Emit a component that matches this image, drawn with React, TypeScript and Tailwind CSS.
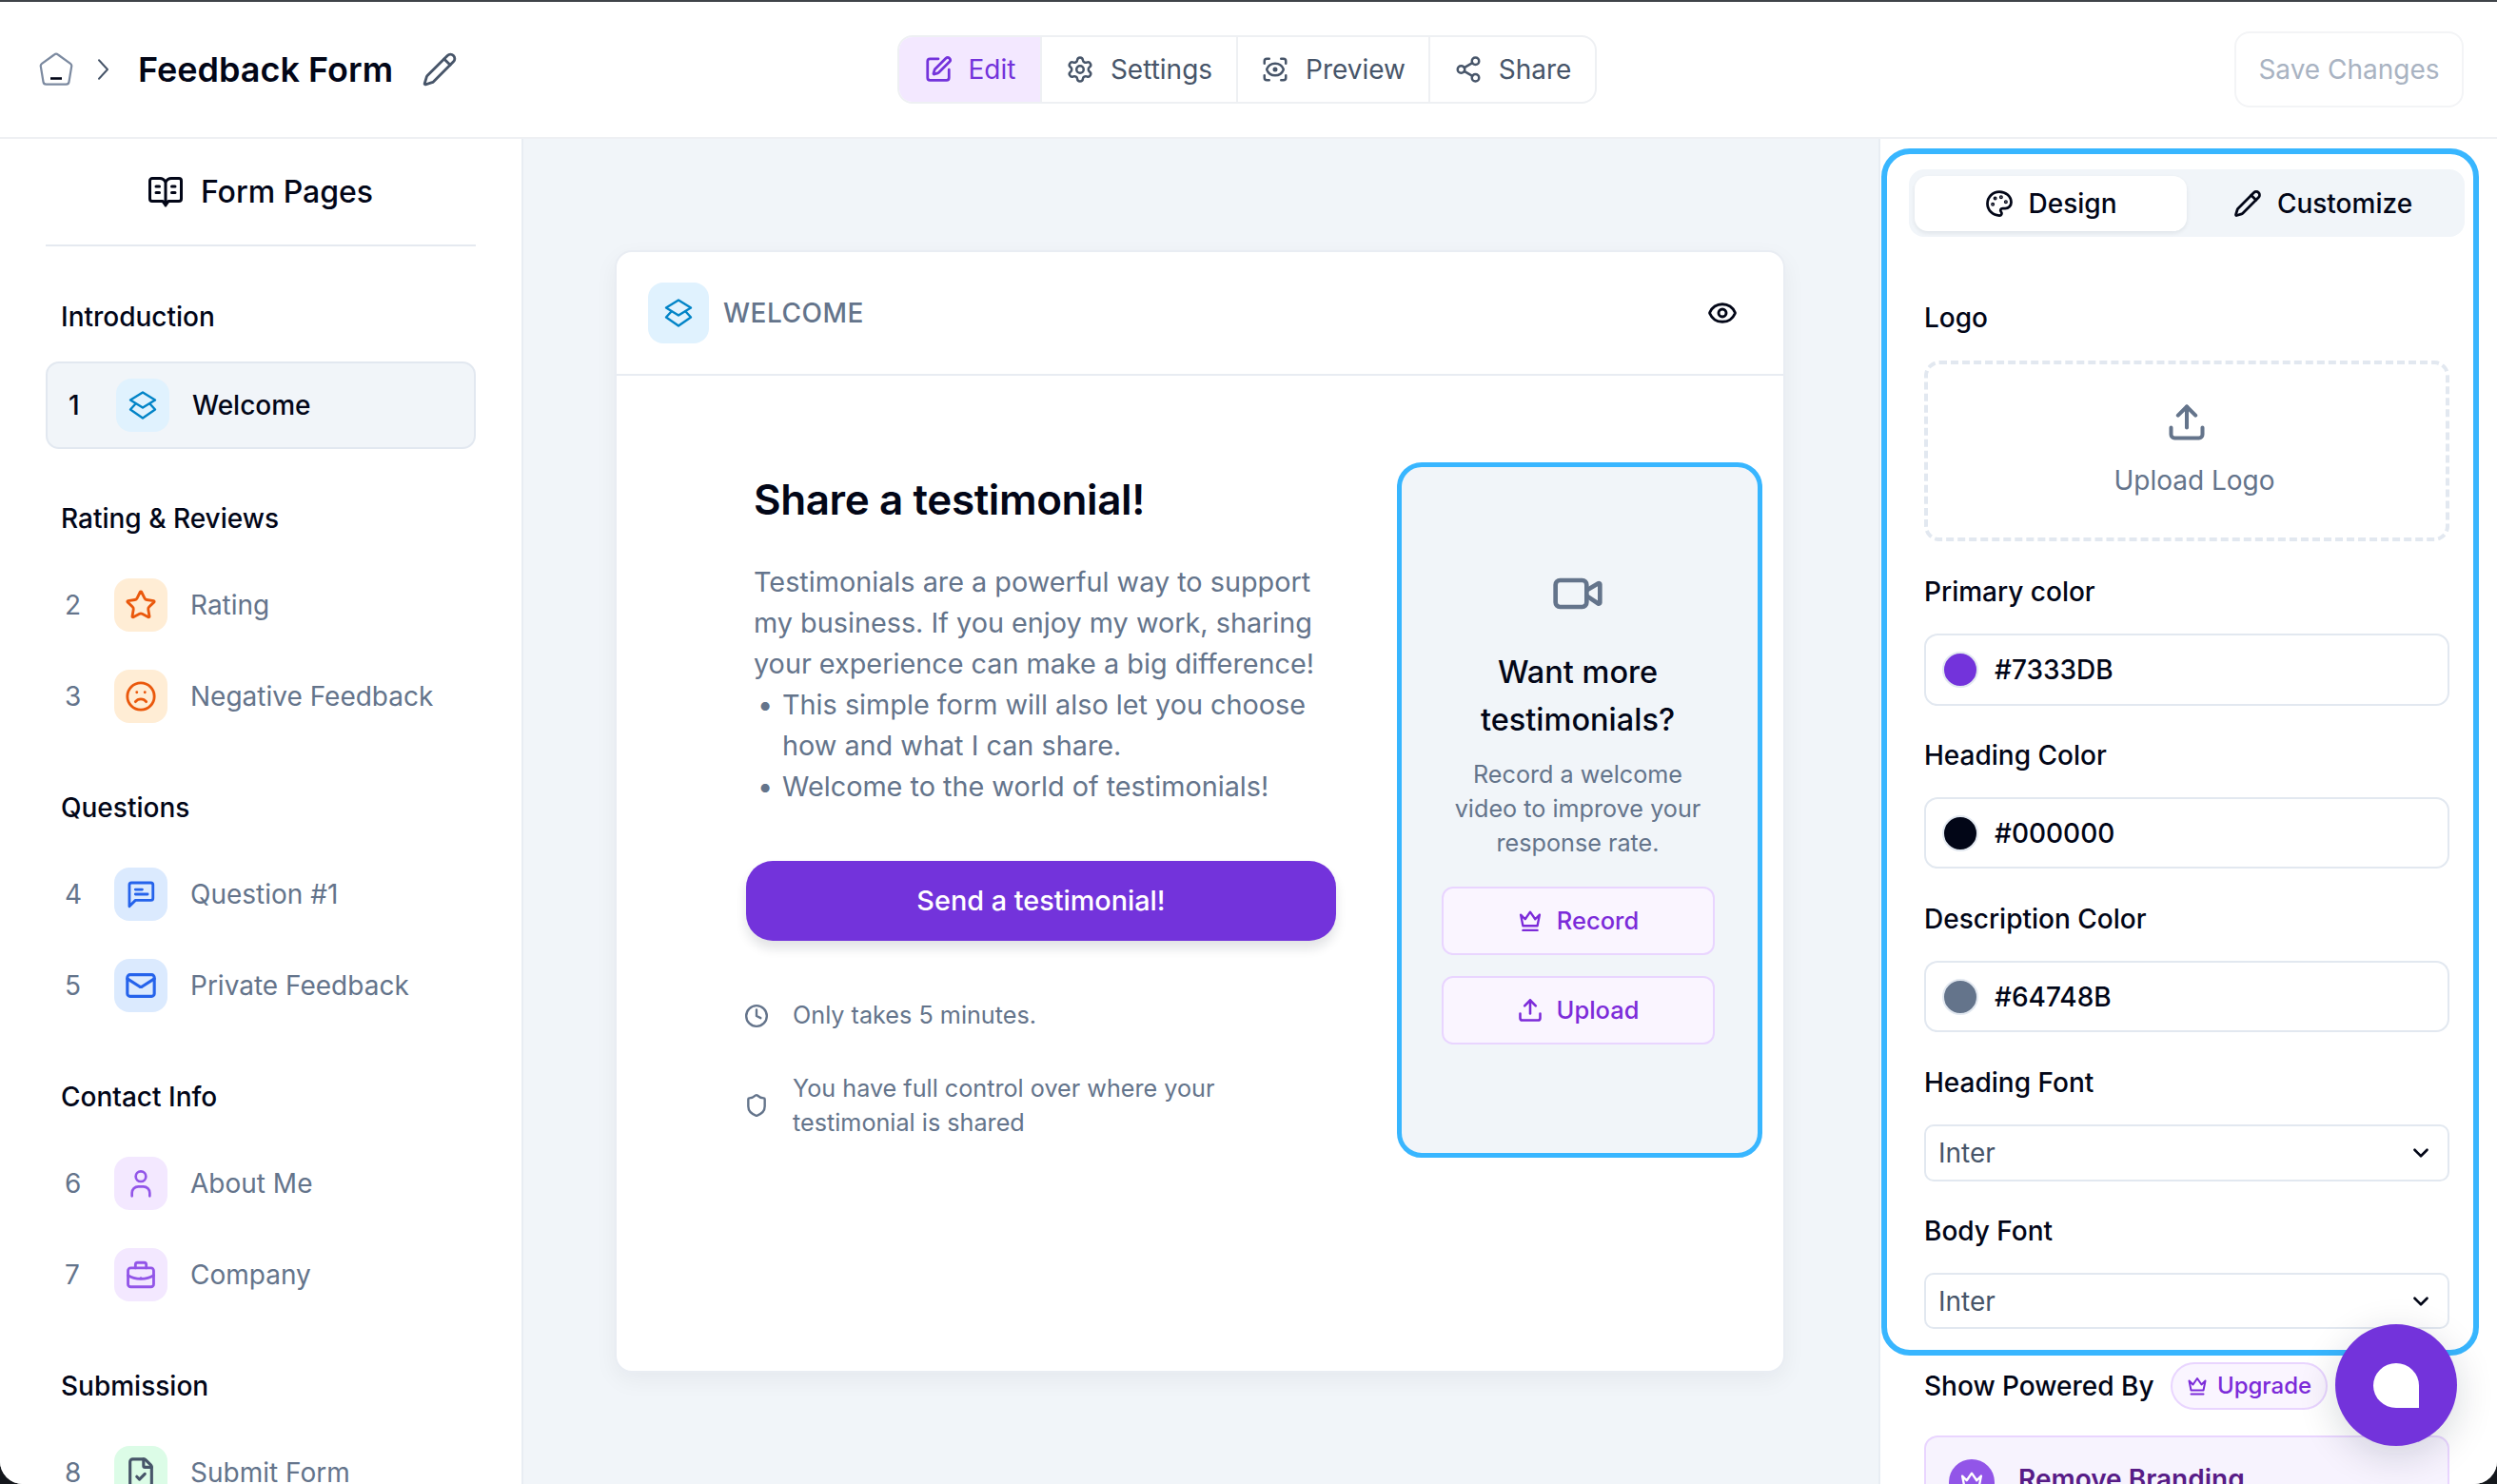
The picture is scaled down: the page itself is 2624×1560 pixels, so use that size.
import { ChevronDown, Clock, Eye, FileCheck, Frown, Mail, Palette, Pencil, ScanEye, Settings, Share2, Shield, SquarePen, Star, Upload, Video } from "lucide-react";
import type { ReactNode } from "react";

const Diamonds = ({ className }: { className?: string }) => (
  <svg viewBox="0 0 30 30" fill="none" stroke="currentColor" strokeWidth="2.4" strokeLinejoin="round" strokeLinecap="round" className={className}>
    <path d="M15 1.5 28 9.5 15 17.5 2 9.5Z" />
    <path d="M7 14 2 19.5 15 28.5 28 19.5 23 14" />
  </svg>
);
const Crown = ({ className }: { className?: string }) => (
  <svg viewBox="0 0 24 24" fill="none" stroke="currentColor" strokeWidth="2" strokeLinejoin="round" strokeLinecap="round" className={className}>
    <path d="M3.5 6.5 7.5 10.5 12 4 16.5 10.5 20.5 6.5 18.5 16.5H5.5Z" />
    <path d="M5.5 20.5H18.5" />
  </svg>
);
const MessageText = ({ className }: { className?: string }) => (
  <svg viewBox="0 0 24 24" fill="none" stroke="currentColor" strokeWidth="2" strokeLinejoin="round" strokeLinecap="round" className={className}>
    <path d="M3.5 21V5a1.5 1.5 0 0 1 1.5-1.5h14.5A1.5 1.5 0 0 1 21 5v10a1.5 1.5 0 0 1-1.5 1.5H8Z" />
    <path d="M8 8.5h5M8 12h9" />
  </svg>
);
const Person = ({ className }: { className?: string }) => (
  <svg viewBox="0 0 24 24" fill="none" stroke="currentColor" strokeWidth="2" strokeLinecap="round" className={className}>
    <circle cx="12" cy="6.5" r="4" />
    <path d="M5 22v-2.5a5 5 0 0 1 5-5h4a5 5 0 0 1 5 5V22" />
  </svg>
);
const Case = ({ className }: { className?: string }) => (
  <svg viewBox="0 0 24 24" fill="none" stroke="currentColor" strokeWidth="2" strokeLinejoin="round" strokeLinecap="round" className={className}>
    <rect x="2.5" y="7" width="19" height="14" rx="2" />
    <path d="M8 7V4.5A1.5 1.5 0 0 1 9.5 3h5A1.5 1.5 0 0 1 16 4.5V7" />
    <path d="M2.5 12.5c5 3.5 14 3.5 19 0" />
    <path d="M12 14.5v.01" />
  </svg>
);
const HomeShape = ({ className }: { className?: string }) => (
  <svg viewBox="0 0 36 36" fill="none" className={className}>
    <path d="M16 2.5a3.2 3.2 0 0 1 4 0L33 11.8a3 3 0 0 1 1.2 3L31.5 31a3 3 0 0 1-3 2.6h-21a3 3 0 0 1-3-2.6L1.8 14.8a3 3 0 0 1 1.2-3Z" stroke="#7c8aa0" strokeWidth="2.2" strokeLinejoin="round" />
    <path d="M12 27.5h12" stroke="#020617" strokeWidth="2.6" />
  </svg>
);
const Book = ({ className }: { className?: string }) => (
  <svg viewBox="0 0 36 33" fill="none" stroke="currentColor" strokeWidth="3" strokeLinejoin="round" strokeLinecap="round" className={className}>
    <path d="M18 6.5V31M18 6.5C16.5 3.5 15 2.5 12 2.5H4A2.5 2.5 0 0 0 1.5 5v19A2.5 2.5 0 0 0 4 26.5h11l3 4 3-4h11a2.5 2.5 0 0 0 2.5-2.5V5A2.5 2.5 0 0 0 32 2.5h-8C21 2.5 19.5 3.5 18 6.5Z" />
    <path d="M8 11h3.5M8 17.5h3.5M24.5 11H28M24.5 17.5H28" />
  </svg>
);

function Badge({ bg, children, className = "h-[56px] w-[56px] rounded-[16px]" }: { bg: string; children: ReactNode; className?: string }) {
  return <div className={`flex shrink-0 items-center justify-center ${bg} ${className}`}>{children}</div>;
}

function Row({ n, label, bg, icon }: { n: number; label: string; bg: string; icon: ReactNode }) {
  return (
    <div className="mt-[40px] flex h-[56px] items-center first:mt-0">
      <span className="w-[72px] pl-[20px] text-[28px] text-[#64748b]">{n}</span>
      <Badge bg={bg}>{icon}</Badge>
      <span className="ml-[24px] text-[28px] text-[#64748b]">{label}</span>
    </div>
  );
}

function Section({ title, mt, children, gap = "mt-[45px]" }: { title: string; mt: string; children: ReactNode; gap?: string }) {
  return (
    <div className={mt}>
      <h3 className="h-[36px] pl-[16px] text-[28px] leading-[36px] font-medium text-[#020617]">{title}</h3>
      <div className={gap}>{children}</div>
    </div>
  );
}

function NavItem({ icon, label, w, active }: { icon: ReactNode; label: string; w: string; active?: boolean }) {
  return (
    <div className={`flex h-full items-center justify-center gap-[17px] border-r-2 border-[#eef0f3] text-[28px] last:border-r-0 ${w} ${active ? "bg-[#f3e8ff] text-[#7333db]" : "text-[#475569]"}`}>
      {icon}
      <span>{label}</span>
    </div>
  );
}

function ColorField({ label, value, swatch, h = "h-[75px]", mt }: { label: string; value: string; swatch: string; h?: string; mt: string }) {
  return (
    <div className={mt}>
      <div className="h-[36px] text-[28px] leading-[36px] font-medium text-[#020617]">{label}</div>
      <div className={`mt-[26px] flex items-center rounded-[14px] border-2 border-[#e2e8f0] pl-[17px] ${h}`}>
        <span className={`h-[38px] w-[38px] rounded-full border-2 border-[#e2e8f0] ${swatch}`} />
        <span className="ml-[17px] text-[28px] font-medium text-[#020617]">{value}</span>
      </div>
    </div>
  );
}

function FontField({ label, mt, h }: { label: string; mt: string; h: string }) {
  return (
    <div className={mt}>
      <div className="h-[36px] text-[28px] leading-[36px] font-medium text-[#020617]">{label}</div>
      <div className={`mt-[26px] flex items-center justify-between rounded-[10px] border-2 border-[#e2e8f0] pr-[15px] pl-[13px] text-[28px] text-[#475569] ${h}`}>
        <span>Inter</span>
        <ChevronDown className="h-[26px] w-[26px] text-[#020617]" strokeWidth={2.4} />
      </div>
    </div>
  );
}

export default function App() {
  return (
    <div className="h-[1560px] w-[2624px] bg-[#14171c] font-['Inter',sans-serif]">
      <div className="relative h-full w-full overflow-hidden rounded-b-[24px] bg-white">
        <div className="h-[2px] bg-[#3f4449]" />
        <header className="flex h-[144px] items-center justify-between border-b-2 border-[#eef0f3] pr-[35px] pl-[41px]">
          <div className="flex w-[902px] items-center">
            <HomeShape className="h-[36px] w-[36px]" />
            <svg viewBox="0 0 16 32" fill="none" stroke="#475569" strokeWidth="2.6" strokeLinecap="round" strokeLinejoin="round" className="ml-[25px] h-[24px] w-[13px]"><path d="M2 3l12 13L2 29" /></svg>
            <span className="ml-[30px] text-[36px] font-semibold text-[#020617]">Feedback Form</span>
            <Pencil className="ml-[30px] h-[38px] w-[38px] text-[#475569]" strokeWidth={1.8} />
          </div>
          <nav className="flex h-[72px] w-[735px] overflow-hidden rounded-[16px] border-2 border-[#eef0f3]">
            <NavItem w="w-[150px]" active label="Edit" icon={<SquarePen className="h-[30px] w-[30px]" strokeWidth={2.2} />} />
            <NavItem w="w-[206px]" label="Settings" icon={<Settings className="h-[30px] w-[30px]" />} />
            <NavItem w="w-[202px]" label="Preview" icon={<ScanEye className="h-[30px] w-[30px]" />} />
            <NavItem w="flex-1" label="Share" icon={<Share2 className="h-[30px] w-[30px]" />} />
          </nav>
          <div className="ml-auto flex h-[80px] w-[241px] items-center justify-center rounded-[16px] border-2 border-[#f3f4f6] text-[28px] text-[#a9b3c2]">Save Changes</div>
        </header>

        <div className="flex h-[1414px]">
          <aside className="w-[550px] shrink-0 border-r-2 border-[#e8edf3] bg-white px-[48px]">
            <div className="flex h-[113px] items-center justify-center gap-[19px] border-b-2 border-[#e5e9f0] text-[32px] font-medium text-[#020617]">
              <Book className="h-[33px] w-[36px]" />
              <span>Form Pages</span>
            </div>
            <Section title="Introduction" mt="mt-[56px]" gap="mt-[29px]">
              <div className="flex h-[92px] items-center rounded-[14px] border-2 border-[#e2e8f0] bg-[#f1f5f9]">
                <span className="w-[72px] pl-[22px] text-[28px] font-medium text-[#020617]">1</span>
                <Badge bg="bg-[#e0f2fe]"><Diamonds className="h-[30px] w-[30px] text-[#0284c7]" /></Badge>
                <span className="ml-[24px] text-[28px] font-medium text-[#020617]">Welcome</span>
              </div>
            </Section>
            <Section title="Rating & Reviews" mt="mt-[55px]">
              <Row n={2} label="Rating" bg="bg-[#ffedd5]" icon={<Star className="h-[34px] w-[34px] text-[#ea580c]" strokeWidth={2} />} />
              <Row n={3} label="Negative Feedback" bg="bg-[#ffedd5]" icon={<Frown className="h-[34px] w-[34px] text-[#ea580c]" strokeWidth={2} />} />
            </Section>
            <Section title="Questions" mt="mt-[71px]">
              <Row n={4} label="Question #1" bg="bg-[#dbeafe]" icon={<MessageText className="h-[34px] w-[34px] text-[#2563eb]" />} />
              <Row n={5} label="Private Feedback" bg="bg-[#dbeafe]" icon={<Mail className="h-[34px] w-[34px] text-[#2563eb]" strokeWidth={2.2} />} />
            </Section>
            <Section title="Contact Info" mt="mt-[71px]">
              <Row n={6} label="About Me" bg="bg-[#f3e8ff]" icon={<Person className="h-[32px] w-[32px] text-[#9255e8]" />} />
              <Row n={7} label="Company" bg="bg-[#f3e8ff]" icon={<Case className="h-[34px] w-[34px] text-[#9255e8]" />} />
            </Section>
            <Section title="Submission" mt="mt-[71px]">
              <Row n={8} label="Submit Form" bg="bg-[#dcfce7]" icon={<FileCheck className="h-[34px] w-[34px] text-[#475569]" strokeWidth={2.2} />} />
            </Section>
          </aside>

          <main className="flex-1 bg-[#f1f5f9] pt-[117px] pl-[96px]">
            <div className="h-[1180px] w-[1230px] rounded-[18px] border-2 border-[#e9edf3] bg-white shadow-[0_8px_24px_rgba(15,23,42,0.05)]">
              <div className="flex h-[130px] items-center justify-between border-b-2 border-[#e8ecf2] pr-[48px] pl-[33px]">
                <div className="flex items-center gap-[15px]">
                  <Badge bg="bg-[#e0f2fe]" className="h-[64px] w-[64px] rounded-[16px]"><Diamonds className="h-[30px] w-[30px] text-[#0284c7]" /></Badge>
                  <span className="text-[28px] font-medium tracking-[0.5px] text-[#64748b]">WELCOME</span>
                </div>
                <Eye className="h-[32px] w-[32px] text-[#020617]" strokeWidth={2.2} />
              </div>
              <div className="flex pt-[104px] pl-[136px]">
                <div className="w-[686px]">
                  <div className="pl-[8px]">
                    <h1 className="text-[44px] leading-[52px] font-semibold tracking-[-0.4px] text-[#020617]">Share a testimonial!</h1>
                    <div className="mt-[39px] text-[28.8px] leading-[43px] text-[#64748b]">
                      <p>Testimonials are a powerful way to support<br />my business. If you enjoy my work, sharing<br />your experience can make a big difference!</p>
                      <ul className="list-none">
                        <li className="flex"><span className="w-[30px] pl-[4px]">•</span><span>This simple form will also let you choose<br />how and what I can share.</span></li>
                        <li className="flex"><span className="w-[30px] pl-[4px]">•</span><span>Welcome to the world of testimonials!</span></li>
                      </ul>
                    </div>
                  </div>
                  <button className="mt-[57px] flex h-[84px] w-[620px] items-center justify-center rounded-[28px] bg-[#7333db] text-[28.8px] font-medium text-white shadow-[0_8px_12px_rgba(15,23,42,0.12)]">Send a testimonial!</button>
                  <div className="mt-[60px] flex items-center text-[25.2px] text-[#64748b]">
                    <Clock className="-ml-[2px] h-[26px] w-[26px]" strokeWidth={2.2} />
                    <span className="ml-[25px]">Only takes 5 minutes.</span>
                  </div>
                  <div className="mt-[39px] flex items-center text-[25.2px] leading-[36px] text-[#64748b]">
                    <Shield className="-ml-[2px] h-[26px] w-[26px]" strokeWidth={2.2} />
                    <span className="ml-[25px]">You have full control over where your<br />testimonial is shared</span>
                  </div>
                </div>
                <div className="-mt-[13px] -ml-[2px] h-[731px] w-[384px] rounded-[26px] border-[5px] border-[#38b6ff] bg-[#f1f5f9] pt-[105px] pr-[4px] text-center">
                  <Video className="mx-auto h-[56px] w-[56px] text-[#64748b]" strokeWidth={2} />
                  <h2 className="mt-[30px] text-[32.5px] leading-[50px] font-medium text-[#020617]">Want more<br />testimonials?</h2>
                  <p className="mt-[14px] text-[25.2px] leading-[36px] text-[#64748b]">Record a welcome<br />video to improve your<br />response rate.</p>
                  <button className="mx-auto mt-[28px] flex h-[72px] w-[287px] items-center justify-center gap-[14px] rounded-[12px] border-2 border-[#e9d5ff] bg-[#faf5ff] text-[25.5px] font-medium text-[#7c2bd9]"><Crown className="h-[28px] w-[28px]" />Record</button>
                  <button className="mx-auto mt-[22px] flex h-[72px] w-[287px] items-center justify-center gap-[14px] rounded-[12px] border-2 border-[#e9d5ff] bg-[#faf5ff] text-[25.5px] font-medium text-[#7c2bd9]"><Upload className="h-[28px] w-[28px]" strokeWidth={2.2} />Upload</button>
                </div>
              </div>
            </div>
          </main>

          <aside className="w-[650px] shrink-0 border-l-2 border-[#e8edf3] bg-white">
            <div className="mt-[10px] ml-[1px] h-[1269px] w-[628px] rounded-[30px] border-[6px] border-[#38b6ff] px-[23px] pt-[16px]">
              <div className="-mr-[14px] flex h-[71px] items-center rounded-[16px] bg-[#f1f5f9] px-[6px]">
                <div className="flex h-[58px] w-[286px] items-center justify-center gap-[16px] rounded-[14px] bg-white text-[28px] font-medium text-[#020617] shadow-[0_2px_4px_rgba(15,23,42,0.08)]">
                  <Palette className="h-[30px] w-[30px]" strokeWidth={2.2} />Design
                </div>
                <div className="flex flex-1 items-center justify-center gap-[16px] text-[28px] font-medium text-[#020617]">
                  <Pencil className="h-[30px] w-[30px]" strokeWidth={2.2} />Customize
                </div>
              </div>
              <div className="pl-[16px]">
                <div className="mt-[67px] h-[36px] text-[28px] leading-[36px] font-medium text-[#020617]">Logo</div>
                <div className="mt-[27px] flex h-[190px] w-[552px] flex-col items-center justify-center rounded-[16px] border-[4px] border-dashed border-[#e2e8f0]">
                  <Upload className="h-[44px] w-[44px] text-[#64748b]" strokeWidth={2.2} />
                  <span className="mt-[18px] ml-[16px] text-[28px] text-[#64748b]">Upload Logo</span>
                </div>
                <div className="w-[552px]">
                  <ColorField mt="mt-[35px]" label="Primary color" value="#7333DB" swatch="bg-[#7333db]" h="h-[76px]" />
                  <ColorField mt="mt-[34px]" label="Heading Color" value="#000000" swatch="bg-[#020617]" />
                  <ColorField mt="mt-[35px]" label="Description Color" value="#64748B" swatch="bg-[#64748b]" />
                  <FontField mt="mt-[35px]" label="Heading Font" h="h-[60px]" />
                  <FontField mt="mt-[34px]" label="Body Font" h="h-[59px]" />
                </div>
              </div>
            </div>
            <div className="ml-[46px] w-[552px]">
              <div className="mt-[7px] flex h-[50px] items-center gap-[17px]">
                <span className="text-[28px] font-medium text-[#020617]">Show Powered By</span>
                <span className="flex h-[50px] w-[165px] items-center justify-center gap-[9px] rounded-full border-2 border-[#e9d5ff] bg-[#faf5ff] text-[24px] font-medium text-[#7c2bd9]"><Crown className="h-[24px] w-[24px]" />Upgrade</span>
              </div>
              <div className="mt-[27px] flex h-[120px] items-start rounded-[14px] border-2 border-[#e9d5ff] bg-[#f7f3fe] pt-[23px] pl-[24px]">
                <span className="flex h-[48px] w-[48px] items-center justify-center rounded-full bg-[#9255e8] text-white"><Crown className="h-[28px] w-[28px]" /></span>
                <span className="ml-[25px] text-[28px] font-semibold text-[#581c87]">Remove Branding</span>
              </div>
            </div>
          </aside>
        </div>

        <div className="absolute top-[1392px] left-[2454px] flex h-[128px] w-[128px] items-center justify-center rounded-full bg-[#7333db] shadow-[0_10px_40px_rgba(15,23,42,0.16)]">
          <span className="h-[47px] w-[48px] rounded-[50%_50%_0_50%] bg-white" />
        </div>
      </div>
    </div>
  );
}
